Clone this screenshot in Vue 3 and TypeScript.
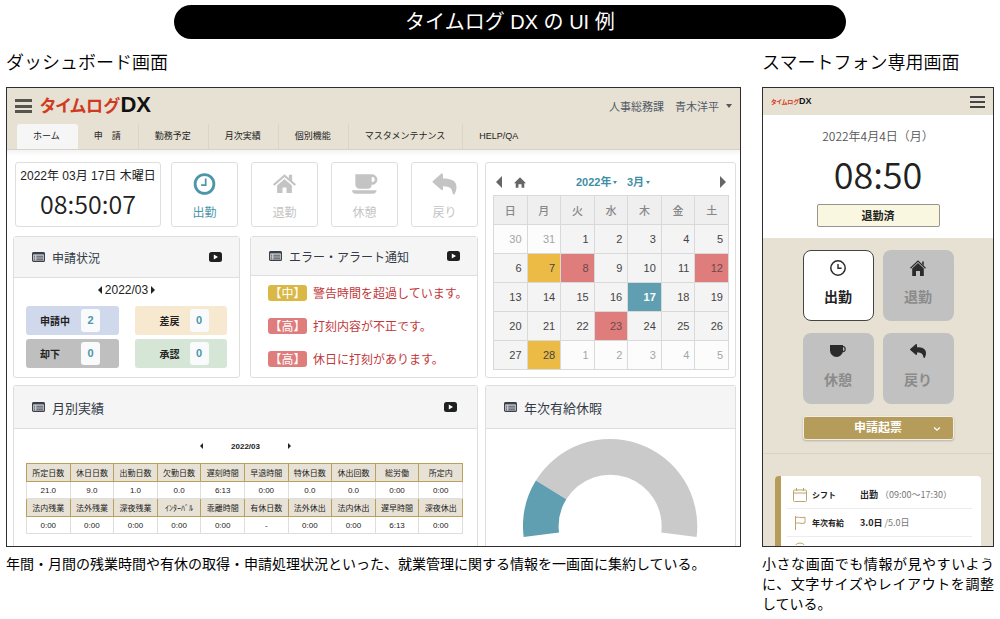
<script setup lang="ts">
interface PunchAction {
  id: string
  label: string
  icon: string
  active: boolean
}

interface CalendarCell {
  day: number
  kind: string
}

const tabs: string[] = ['ホーム', '申　請', '勤務予定', '月次実績', '個別機能', 'マスタメンテナンス', 'HELP/QA']

const punches: PunchAction[] = [
  { id: 'in', label: '出勤', icon: 'clock', active: true },
  { id: 'out', label: '退勤', icon: 'home', active: false },
  { id: 'rest', label: '休憩', icon: 'cup', active: false },
  { id: 'back', label: '戻り', icon: 'reply', active: false },
]

const requests = [
  { label: '申請中', count: 2, tone: 'blue' },
  { label: '差戻', count: 0, tone: 'orange' },
  { label: '却下', count: 0, tone: 'gray' },
  { label: '承認', count: 0, tone: 'green' },
]

const alerts = [
  { level: '【中】', tone: 'mid', text: '警告時間を超過しています。' },
  { level: '【高】', tone: 'high', text: '打刻内容が不正です。' },
  { level: '【高】', tone: 'high', text: '休日に打刻があります。' },
]

const weekdays: string[] = ['日', '月', '火', '水', '木', '金', '土']
const marks: Record<number, string> = { 7: 'warn', 8: 'error', 12: 'error', 17: 'today', 23: 'error', 28: 'warn' }

const weeks: CalendarCell[][] = Array.from({ length: 5 }, (_, w) =>
  Array.from({ length: 7 }, (_, d) => {
    const n = w * 7 + d - 1
    if (n < 1) return { day: n + 31, kind: 'outside' }
    if (n > 28 && w === 4) return { day: n - 28, kind: 'outside' }
    return { day: n, kind: marks[n] ?? '' }
  }),
)

const monthly = [
  {
    heads: ['所定日数', '休日日数', '出勤日数', '欠勤日数', '遅刻時間', '早退時間', '特休日数', '休出回数', '総労働', '所定内'],
    values: ['21.0', '9.0', '1.0', '0.0', '6:13', '0:00', '0.0', '0.0', '0:00', '0:00'],
  },
  {
    heads: ['法内残業', '法外残業', '深夜残業', 'ｲﾝﾀｰﾊﾞﾙ', '乖離時間', '有休日数', '法外休出', '法内休出', '遅早時間', '深夜休出'],
    values: ['0:00', '0:00', '0:00', '0:00', '0:00', '-', '0:00', '0:00', '6:13', '0:00'],
  },
]
</script>

<template>
  <svg class="defs" aria-hidden="true">
    <symbol id="i-clock" viewBox="0 0 24 24">
      <circle cx="12" cy="12" r="9.4" fill="none" stroke="currentColor" stroke-width="2.800" />
      <path d="M13.2 6.6v6.6H8.6" fill="none" stroke="currentColor" stroke-width="1.7" />
    </symbol>
    <symbol id="i-home" viewBox="0 0 24 24">
      <path d="M1.2 13 12 3.6 22.8 13" fill="none" stroke="currentColor" stroke-width="2.2" />
      <path d="M16.4 2.8h3.2v7l-3.2-3zM12 7l7.4 6.6V21H14v-5.6h-4V21H4.600v-7.400z" fill="currentColor" />
    </symbol>
    <symbol id="i-cup" viewBox="0 0 28 24">
      <path
        d="M4.500 2H22a5.400 5.400 0 0 1 0 10.800h-.6A4.300 4.300 0 0 1 17.400 17H8.800a4.300 4.300 0 0 1-4.300-4.300zM21.500 4.800V10h.5a2.600 2.600 0 0 0 0-5.200z"
        fill="currentColor"
        fill-rule="evenodd"
      />
      <path d="M1 18.600h25.500c0 2-1.500 3.600-4 3.600H5c-2.500 0-4-1.600-4-3.600z" fill="currentColor" />
    </symbol>
    <symbol id="i-reply" viewBox="0 0 512 512">
      <path
        d="M8.309 189.836L184.313 37.851C199.719 24.546 224 35.347 224 56.015v80.053c160.629 1.839 288 34.032 288 186.258 0 61.441-19.581 112.309-43.333 154.132-13.653 9.931-33.111-2.533-38.077-18.631-15-105-51.507-153.510-206.590-155.742V360c0 20.700-24.300 31.453-39.687 18.164l-176.004-152c-11.071-9.562-11.086-26.753 0-36.328z"
        fill="currentColor"
      />
    </symbol>
    <symbol id="i-list" viewBox="0 0 13 10">
      <rect x=".6" y=".6" width="11.800" height="8.800" rx="1" fill="#d4d6d9" stroke="#3a414b" stroke-width="1.200" />
      <path d="M.6 1.500h11.800" stroke="#3a414b" stroke-width="1.800" />
      <path d="M2 4.200h1.200M2 6h1.200M2 7.800h1.200M4.300 4.200H11M4.300 6H11M4.300 7.800H11" stroke="#3a414b" stroke-width=".9" />
    </symbol>
    <symbol id="i-play" viewBox="0 0 13 10">
      <rect width="13" height="10" rx="2.500" fill="#1f2022" />
      <path d="M4.800 2.500v5l4.200-2.500z" fill="#fff" />
    </symbol>
    <symbol id="m-clock" viewBox="0 0 16 16">
      <circle cx="8" cy="8" r="7.200" fill="none" stroke="currentColor" stroke-width="1.500" />
      <path d="M8 4v4.300h3.600" fill="none" stroke="currentColor" stroke-width="1.400" />
    </symbol>
    <symbol id="m-home" viewBox="0 0 16 16">
      <path d="M.5 8.300 8 1l7.500 7.300" fill="none" stroke="currentColor" stroke-width="1.200" />
      <path d="M8 3l5.800 5.600V16H10v-5H6v5H2.200V8.600zM12.200 1.500h1.600v4l-1.600-1.500z" fill="currentColor" />
    </symbol>
    <symbol id="m-cup" viewBox="0 0 16 16">
      <path d="M0 2h13v5.500a6.500 6.500 0 0 1-13 0z" fill="currentColor" />
      <path d="M12.500 3.700h.6a2 2 0 0 1 2 2v.6a2 2 0 0 1-2 2.300h-1" fill="none" stroke="currentColor" stroke-width="1.200" />
    </symbol>
  </svg>

  <main class="page">
    <h1 class="title">タイムログ DX の UI 例</h1>

    <div class="columns">
      <h2 class="heading">ダッシュボード画面</h2>
      <h2 class="heading">スマートフォン専用画面</h2>

      <section class="frame dashboard">
        <header class="top">
          <div class="brandbar">
            <button class="burger" aria-label="メニュー"><i></i><i></i><i></i></button>
            <a class="logo" href="#"><span>タイムログ</span><b>DX</b></a>
            <button class="user">人事総務課　青木洋平<i class="caret"></i></button>
          </div>
          <nav class="tabs">
            <a v-for="(tab, i) in tabs" :key="tab" href="#" :class="{ current: i === 0 }">{{ tab }}</a>
          </nav>
        </header>

        <div class="content">
          <div class="stack">
            <div class="punchrow">
              <div class="card now">
                <p class="date">2022年 03月 17日 木曜日</p>
                <p class="time">08:50:07</p>
              </div>
              <div class="punches">
                <button v-for="p in punches" :key="p.id" class="card punch" :class="{ active: p.active }">
                  <svg class="picon"><use :href="'#i-' + p.icon" /></svg>
                  {{ p.label }}
                </button>
              </div>
            </div>

            <div class="pair">
              <section class="card">
                <header class="cardhead">
                  <svg class="small"><use href="#i-list" /></svg>
                  <h3>申請状況</h3>
                  <svg class="small"><use href="#i-play" /></svg>
                </header>
                <div class="period">
                  <button class="arrow left" aria-label="前月"></button>2022/03<button class="arrow right" aria-label="翌月"></button>
                </div>
                <div class="requests">
                  <a v-for="r in requests" :key="r.label" href="#" class="request" :class="r.tone">
                    <span>{{ r.label }}</span><b>{{ r.count }}</b>
                  </a>
                </div>
              </section>

              <section class="card">
                <header class="cardhead low">
                  <svg class="small"><use href="#i-list" /></svg>
                  <h3>エラー・アラート通知</h3>
                  <svg class="small"><use href="#i-play" /></svg>
                </header>
                <ul class="alerts">
                  <li v-for="a in alerts" :key="a.text">
                    <span class="level" :class="a.tone">{{ a.level }}</span>{{ a.text }}
                  </li>
                </ul>
              </section>
            </div>
          </div>

          <section class="card calendar">
            <div class="calnav">
              <button class="arrow left big" aria-label="前の月"></button>
              <button class="calhome" aria-label="今月">
                <svg viewBox="0 0 14 12"><path d="M7 0l7 6.800h-2V12H8.800V8H5.200v4H2V6.800H0z" fill="#666" /></svg>
              </button>
              <div class="pickers">
                <label><select aria-label="年"><option>2022年</option></select><i class="caret"></i></label>
                <label><select aria-label="月"><option>3月</option></select><i class="caret"></i></label>
              </div>
              <button class="arrow right big" aria-label="次の月"></button>
            </div>
            <table>
              <thead>
                <tr><th v-for="w in weekdays" :key="w" scope="col">{{ w }}</th></tr>
              </thead>
              <tbody>
                <tr v-for="(week, i) in weeks" :key="i">
                  <td v-for="(cell, j) in week" :key="j" :class="cell.kind">{{ cell.day }}</td>
                </tr>
              </tbody>
            </table>
          </section>

          <section class="card open">
            <header class="cardhead tall">
              <svg class="small"><use href="#i-list" /></svg>
              <h3>月別実績</h3>
              <svg class="small"><use href="#i-play" /></svg>
            </header>
            <div class="period mini">
              <button class="arrow left tiny" aria-label="前月"></button>2022/03<button class="arrow right tiny" aria-label="翌月"></button>
            </div>
            <table class="results">
              <tbody>
                <template v-for="(group, i) in monthly" :key="i">
                  <tr><th v-for="h in group.heads" :key="h" scope="col">{{ h }}</th></tr>
                  <tr><td v-for="(v, k) in group.values" :key="k">{{ v }}</td></tr>
                </template>
              </tbody>
            </table>
          </section>

          <section class="card open">
            <header class="cardhead tall">
              <svg class="small"><use href="#i-list" /></svg>
              <h3>年次有給休暇</h3>
            </header>
            <svg class="donut" viewBox="0 0 176 100" role="img" aria-label="年次有給休暇の取得状況">
              <path d="M13 42A88 88 0 0 1 175.300 99L139.600 94.500A52 52 0 0 0 43.700 60.800z" fill="#cacaca" />
              <path d="M.7 99A88 88 0 0 1 13 42L43.700 60.800A52 52 0 0 0 36.400 94.500z" fill="#609fb1" />
            </svg>
          </section>
        </div>
      </section>

      <section class="frame phone">
        <header class="phonetop">
          <a class="logo mini" href="#"><span>タイムログ</span><b>DX</b></a>
          <button class="burger thin" aria-label="メニュー"><i></i><i></i><i></i></button>
        </header>
        <div class="status">
          <p class="date">2022年4月4日（月）</p>
          <p class="time">08:50</p>
          <button class="done">退勤済</button>
        </div>
        <div class="pad">
          <button v-for="p in punches" :key="p.id" class="key" :class="{ active: p.active }">
            <svg><use :href="p.icon === 'reply' ? '#i-reply' : '#m-' + p.icon" /></svg>
            {{ p.label }}
          </button>
          <button class="apply">
            申請起票
            <svg viewBox="0 0 8 6"><path d="M1.200 1.500 4 4.200l2.800-2.700" fill="none" stroke="#fff" stroke-width="1.300" /></svg>
          </button>
        </div>
        <div class="lower">
          <ul class="info">
            <li>
              <svg viewBox="0 0 14 14"><path d="M1.500 2h11a1 1 0 0 1 1 1v9.500a1 1 0 0 1-1 1h-11a1 1 0 0 1-1-1V3a1 1 0 0 1 1-1zM.5 5h13M3.500 0v3M10.500 0v3" /></svg>
              <strong>シフト</strong>
              <span><b>出勤</b> （09:00〜17:30）</span>
            </li>
            <li>
              <svg viewBox="0 0 14 14"><path d="M2.500 0v14M2.500 1.500c3-1.200 5 1 9.500-.3V7c-4.500 1.300-6.500-.9-9.500.3" /></svg>
              <strong>年次有給</strong>
              <span><b>3.0日</b> /5.0日</span>
            </li>
            <li class="cut">
              <svg viewBox="0 0 14 14"><circle cx="7" cy="7" r="6" /></svg>
            </li>
          </ul>
        </div>
      </section>

      <p class="caption">年間・月間の残業時間や有休の取得・申請処理状況といった、就業管理に関する情報を一画面に集約している。</p>
      <p class="caption">小さな画面でも情報が見やすいように、文字サイズやレイアウトを調整している。</p>
    </div>
  </main>
</template>

<style>
body {
  background: #fff;
}
</style>

<style scoped>
* {
  box-sizing: border-box;
  margin: 0;
  padding: 0;
}
.defs {
  display: none;
}
button,
select {
  font: inherit;
  color: inherit;
  border: 0;
  background: none;
  appearance: none;
  cursor: pointer;
}
a {
  color: inherit;
  text-decoration: none;
}
ul {
  list-style: none;
}
table {
  border-collapse: collapse;
  table-layout: fixed;
}
.page {
  padding: 5px 6px 0;
  font-family: 'Liberation Sans', 'Noto Sans CJK JP', sans-serif;
  color: #222;
}
.title {
  width: 68%;
  margin: 0 15% 0 auto;
  border-radius: 17px;
  background: #000;
  color: #fff;
  font-size: 20px;
  font-weight: 400;
  line-height: 34px;
  text-align: center;
}
.columns {
  display: grid;
  grid-template-columns: 735fr 232fr;
  column-gap: 21px;
}
.heading {
  padding: 11px 0;
  font-size: 18px;
  font-weight: 350;
  line-height: 26px;
  color: #000;
}
.caption {
  padding-top: 7px;
  font-size: 14px;
  line-height: 20px;
  color: #000;
  text-align: justify;
}
.frame {
  min-width: 0;
  border: 1px solid #2e2e30;
  overflow: hidden;
  background: #fff;
}

/* dashboard header */
.top {
  background: #e7e1d3;
  border-bottom: 1px solid #d8d3c8;
}
.brandbar {
  display: flex;
  align-items: center;
  height: 36px;
  padding: 0 8px;
}
.burger {
  display: flex;
  flex-direction: column;
  justify-content: space-between;
  width: 17px;
  height: 14px;
}
.burger i {
  height: 3px;
  background: #57534d;
}
.burger.thin {
  width: 15px;
  height: 12px;
}
.burger.thin i {
  height: 2px;
  background: #444;
}
.logo {
  display: flex;
  align-items: baseline;
  gap: 1px;
  margin-left: 8px;
  line-height: 24px;
  color: #d03a22;
  font-size: 17px;
  font-weight: 700;
  font-feature-settings: 'palt';
}
.logo b {
  color: #111;
  font-size: 22px;
}
.logo.mini {
  gap: 0;
  margin-left: 0;
  font-size: 6px;
  line-height: 12px;
}
.logo.mini b {
  font-size: 9px;
}
.user {
  display: flex;
  align-items: center;
  gap: 7px;
  margin-left: auto;
  font-size: 11px;
  color: #525a68;
}
.caret {
  border: 3px solid transparent;
  border-top: 4px solid currentColor;
  border-bottom: 0;
}
.tabs {
  display: flex;
  padding-left: 10px;
  font-size: 9px;
  line-height: 25px;
}
.tabs a {
  padding: 0 17px 0 16px;
  border-right: 1px solid #dad5c9;
}
.tabs a:last-child,
.tabs a.current {
  border-right-color: transparent;
}
.tabs a.current {
  border-radius: 3px 3px 0 0;
  background: #f6f6f6;
}

/* dashboard body */
.content {
  display: grid;
  grid-template-columns: 465fr 251fr;
  gap: 7px;
  padding: 12px 4px 0 6px;
  background: linear-gradient(#f3f3f3, #fff 6px);
}
.card {
  min-width: 0;
  border: 1px solid #dedede;
  border-radius: 3px;
  background: #fff;
}
.card.open {
  border-bottom: 0;
  border-radius: 3px 3px 0 0;
}
.stack {
  display: flex;
  flex-direction: column;
  gap: 9px;
}
.punchrow {
  display: grid;
  grid-template-columns: 146fr 307fr;
  gap: 10px;
  padding-left: 2px;
}
.punches {
  display: grid;
  grid-template-columns: repeat(4, 1fr);
  gap: 13px;
}
.now {
  height: 65px;
  text-align: center;
  white-space: nowrap;
}
.now .date {
  padding-top: 4px;
  font-size: 12px;
  line-height: 18px;
}
.now .time {
  font-family: 'Noto Sans CJK JP', sans-serif;
  font-size: 25px;
  font-weight: 350;
  line-height: 36px;
}
.punch {
  display: flex;
  flex-direction: column;
  align-items: center;
  gap: 8px;
  padding-top: 9px;
  border: 1px solid #dedede;
  background: #fff;
  color: #c4c4c4;
  font-size: 12px;
  line-height: 18px;
}
.punch.active {
  color: #4c96a9;
}
.picon {
  width: 27px;
  height: 24px;
}
.pair {
  display: grid;
  grid-template-columns: 227fr 228fr;
  gap: 10px;
  height: 142px;
}
.cardhead {
  display: flex;
  align-items: center;
  gap: 7px;
  height: 41px;
  padding: 0 17px 0 18px;
  border-bottom: 1px solid #dedede;
  background: #f5f5f5;
}
.cardhead.low {
  height: 39px;
}
.cardhead.tall {
  height: 43px;
  padding-right: 20px;
}
.cardhead h3 {
  flex: 1;
  font-size: 12px;
  font-weight: 400;
  color: #333a45;
}
.cardhead.tall h3 {
  font-size: 13px;
}
.small {
  width: 13px;
  height: 10px;
}
.period {
  display: flex;
  justify-content: center;
  align-items: center;
  gap: 3px;
  height: 24px;
  font-size: 12px;
}
.arrow {
  border: 4px solid transparent;
}
.arrow.left {
  border-left: 0;
  border-right: 4px solid #222;
}
.arrow.right {
  border-right: 0;
  border-left: 4px solid #222;
}
.arrow.big {
  border-width: 6px;
}
.arrow.big.left {
  border-left-width: 0;
  border-right-color: #666;
}
.arrow.big.right {
  border-right-width: 0;
  border-left-color: #666;
}
.arrow.tiny {
  border-width: 3px;
}
.arrow.tiny.left {
  border-left-width: 0;
}
.arrow.tiny.right {
  border-right-width: 0;
}
.requests {
  display: grid;
  grid-template-columns: 1fr 1fr;
  gap: 4px 16px;
  padding: 4px 12px 0;
}
.request {
  display: flex;
  align-items: center;
  gap: 10px;
  height: 29px;
  padding-left: 14px;
  border-radius: 3px;
  font-size: 10px;
  font-weight: 700;
}
.request span {
  width: 31px;
}
.request:nth-child(even) span {
  text-align: right;
}
.request b {
  width: 19px;
  border-radius: 3px;
  background: #f8fafc;
  color: #4c96a9;
  font-size: 11px;
  line-height: 23px;
  text-align: center;
}
.blue {
  background: #cfd9eb;
}
.orange {
  background: #f7e8d0;
}
.gray {
  background: #bfbfbf;
}
.green {
  background: #d5e5d6;
}
.alerts li {
  display: flex;
  align-items: center;
  gap: 6px;
  height: 33px;
  padding-left: 17px;
  color: #c1383a;
  font-size: 12px;
  white-space: nowrap;
}
.level {
  width: 39px;
  border-radius: 3px;
  color: #fff;
  font-family: 'Noto Sans CJK JP', sans-serif;
  line-height: 16px;
  text-align: center;
}
.mid {
  background: #d9b845;
}
.high {
  background: #df7d7d;
}

/* calendar */
.calendar {
  padding: 0 6px 0 7px;
}
.calnav {
  display: flex;
  align-items: center;
  height: 32px;
  padding: 6px 3px 0;
}
.calhome {
  display: flex;
  width: 12px;
  margin-left: 12px;
}
.calhome svg {
  width: 12px;
  height: 11px;
}
.pickers {
  display: flex;
  flex: 1;
  justify-content: center;
  gap: 10px;
  padding-right: 20px;
  color: #3f8fa4;
  font-size: 11px;
  font-weight: 700;
}
.pickers label {
  display: flex;
  align-items: center;
  gap: 1px;
}
.pickers .caret {
  border-width: 3px 2px 0;
}
.calendar table {
  width: 100%;
  font-size: 11px;
  color: #444;
}
.calendar th,
.calendar td {
  height: 29px;
  border: 1px solid #d9d9d9;
  background: #f4f4f4;
}
.calendar th {
  background: #efefef;
  color: #888;
  font-weight: 500;
}
.calendar td {
  padding-right: 5px;
  text-align: right;
}
.calendar .outside {
  background: #fcfcfc;
  color: #a5a5a5;
}
.calendar .warn {
  background: #ebbb45;
}
.calendar .error {
  background: #df7d7d;
  color: #6a4a4a;
}
.calendar .today {
  background: #609fb1;
  color: #fff;
  font-weight: 700;
}

/* monthly results */
.period.mini {
  gap: 28px;
  height: 34px;
  font-size: 8px;
  font-weight: 700;
}
.results {
  width: calc(100% - 26px);
  margin: 0 13px 12px 12px;
  font-size: 8px;
  text-align: center;
  white-space: nowrap;
}
.results th {
  height: 18px;
  border: 1px solid #b9a15c;
  background: #e8e2d6;
  font-weight: 400;
}
.results td {
  height: 17px;
  border: 1px solid #dedede;
}
.donut {
  display: block;
  width: 70%;
  margin: 10px auto 0;
}

/* phone */
.phone {
  display: flex;
  flex-direction: column;
}
.phonetop {
  display: flex;
  align-items: center;
  justify-content: space-between;
  height: 27px;
  padding: 0 8px;
  background: #e7e1d3;
}
.status {
  height: 123px;
  text-align: center;
  font-family: 'Noto Sans CJK JP', sans-serif;
}
.status .date {
  padding-top: 11px;
  font-size: 12px;
  font-weight: 350;
  line-height: 20px;
  color: #555;
}
.status .time {
  font-size: 36px;
  font-weight: 350;
  line-height: 54px;
}
.done {
  width: 123px;
  margin-top: 4px;
  border: 1px solid #96948c;
  border-radius: 2px;
  background: #f9f7e0;
  font-size: 11px;
  font-weight: 700;
  line-height: 21px;
}
.pad {
  display: grid;
  grid-template-columns: 71px 71px;
  justify-content: center;
  gap: 12px 9px;
  padding: 12px 0 13px;
  background: #e7e1d3;
  border-bottom: 1px solid #d9d3c6;
}
.key {
  display: flex;
  flex-direction: column;
  align-items: center;
  gap: 11px;
  height: 71px;
  padding-top: 10px;
  border-radius: 8px;
  background: #c1c1c1;
  color: #8b8b8b;
  font-size: 14px;
  font-weight: 700;
  line-height: 20px;
}
.key svg {
  width: 16px;
  height: 16px;
  color: #2b2b2b;
}
.key.active {
  padding-top: 9px;
  border: 1px solid #444;
  background: #fff;
  color: #222;
}
.apply {
  position: relative;
  grid-column: 1 / -1;
  border: 1px solid #f1ede2;
  border-radius: 3px;
  background: #b59c5a;
  box-shadow: 0 1px 2px #b8b2a4;
  color: #fff;
  font-size: 12px;
  font-weight: 700;
  line-height: 22px;
}
.apply svg {
  position: absolute;
  right: 12px;
  top: 9px;
  width: 8px;
  height: 6px;
}
.lower {
  flex: 1;
  padding: 22px 12px 0;
  background: #e7e1d3;
}
.info {
  height: 100%;
  padding: 5px 9px 0 6px;
  border-left: 6px solid #b59c5a;
  border-radius: 4px 4px 0 0;
  background: #fff;
}
.info li {
  display: grid;
  grid-template-columns: 14px 43px 1fr;
  align-items: center;
  column-gap: 5px;
  height: 28px;
  padding-left: 6px;
  border-bottom: 1px solid #ececec;
  font-family: 'Noto Sans CJK JP', sans-serif;
  font-size: 9px;
  color: #777;
  white-space: nowrap;
}
.info svg {
  width: 14px;
  height: 14px;
  fill: none;
  stroke: #bda567;
}
.info strong {
  font-size: 8px;
  color: #222;
}
.info b {
  color: #222;
}
.info .cut {
  align-items: start;
  height: 8px;
  padding-top: 5px;
  border: 0;
  overflow: hidden;
}
</style>
